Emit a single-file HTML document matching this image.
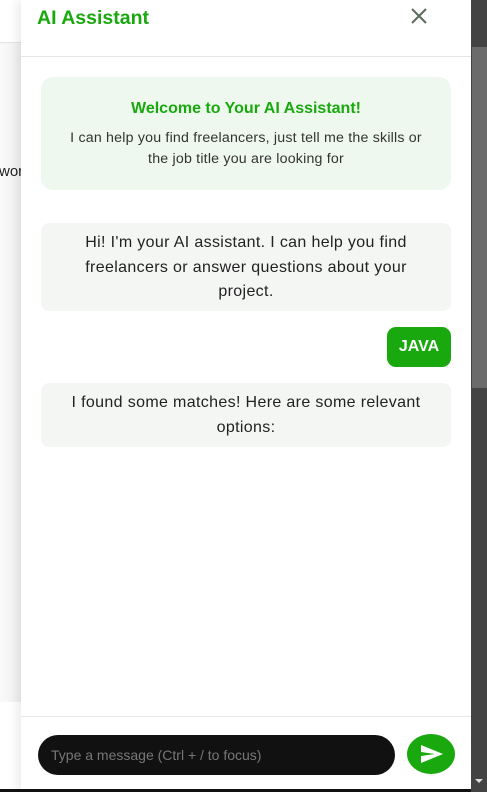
<!DOCTYPE html>
<html><head><style>
*{margin:0;padding:0;box-sizing:border-box}
body{width:487px;height:792px;overflow:hidden;font-family:"Liberation Sans",sans-serif;background:#fff;position:relative}
.bg{position:absolute;left:0;top:0;width:21px;height:792px;background:#f4f5f4}
.bg .top{position:absolute;left:0;top:0;width:21px;height:43px;background:#fff;border-bottom:1px solid #e3e3e3}
.bg .mid{position:absolute;left:0;top:44px;width:21px;height:658px;background:linear-gradient(90deg,#fafafa,#eef0ee)}
.bg .wor{position:absolute;left:-1px;top:163px;font-size:15px;color:#222}
.bg .bot{position:absolute;left:0;top:702px;width:21px;height:90px;background:#fff}
.panel{position:absolute;left:21px;top:0;width:450px;height:792px;background:#fff;box-shadow:-4px 0 10px rgba(0,0,0,.08)}
.hdr{height:57px;border-bottom:1px solid #e3e6e4;position:relative}
.hdr h1{position:absolute;left:16px;top:7px;font-size:19.5px;color:#1aa80f;font-weight:bold}
.x{position:absolute;left:388px;top:6px}
.welcome{position:absolute;left:20px;top:77px;width:410px;height:113px;background:#eef8ee;border-radius:12px;text-align:center}
.welcome h2{font-size:16px;color:#1aa80f;margin-top:23px}
.welcome p{font-size:14.2px;color:#333;line-height:21px;margin-top:10px;padding:0 26px;letter-spacing:0.2px}
.msg{position:absolute;left:20px;width:410px;background:#f4f6f4;border-radius:8px;text-align:center;font-size:16px;color:#222;line-height:24.5px;letter-spacing:0.35px}
.user{position:absolute;left:366px;top:327px;width:64px;height:40px;background:#1aa80f;color:#fff;border-radius:9px;font-size:16px;font-weight:bold;text-align:center;line-height:40px}
.foot{position:absolute;left:0;top:716px;width:450px;border-top:1px solid #e3e9e6;height:76px}
.inp{position:absolute;left:17px;top:18px;width:357px;height:40px;background:#111;border-radius:20px;color:#777;font-size:14px;line-height:40px;padding-left:13px}
.send{position:absolute;left:386px;top:17px;width:48px;height:40px;background:#1aa80f;border-radius:50%}
.sb{position:absolute;left:471px;top:0;width:16px;height:792px;background:#434343}
.thumb{position:absolute;left:472px;top:47px;width:15px;height:341px;background:#6b6b6b}
.bl{position:absolute;left:0;top:789px;width:471px;height:3px;background:#111}
</style></head><body>
<div class="bg"><div class="top"></div><div class="mid"></div><div class="wor">wor</div><div class="bot"></div></div>
<div class="panel">
<div class="hdr"><h1>AI Assistant</h1>
<svg class="x" width="20" height="20" viewBox="0 0 20 20"><path d="M3 3L17 17M17 3L3 17" stroke="#5a6a5c" stroke-width="2"/></svg></div>
<div class="welcome"><h2>Welcome to Your AI Assistant!</h2><p>I can help you find freelancers, just tell me the skills or<br>the job title you are looking for</p></div>
<div class="msg" style="top:223px;height:88px;padding:8px 26px">Hi! I'm your AI assistant. I can help you find freelancers or answer questions about your project.</div>
<div class="user">JAVA</div>
<div class="msg" style="top:383px;height:64px;padding:8px 26px">I found some matches! Here are some relevant options:</div>
<div class="foot"><div class="inp">Type a message (Ctrl + / to focus)</div>
<div class="send"><svg width="48" height="40" viewBox="0 0 48 40"><path d="M14 11L36 20L14 29L14 22L28 20L14 18Z" fill="#fff"/></svg></div></div>
</div>
<div class="sb"></div><div class="thumb"></div>
<svg style="position:absolute;left:475px;top:778px" width="8" height="6"><path d="M0 1H8L4 5Z" fill="#ddd"/></svg>
<div class="bl"></div>
</body></html>
